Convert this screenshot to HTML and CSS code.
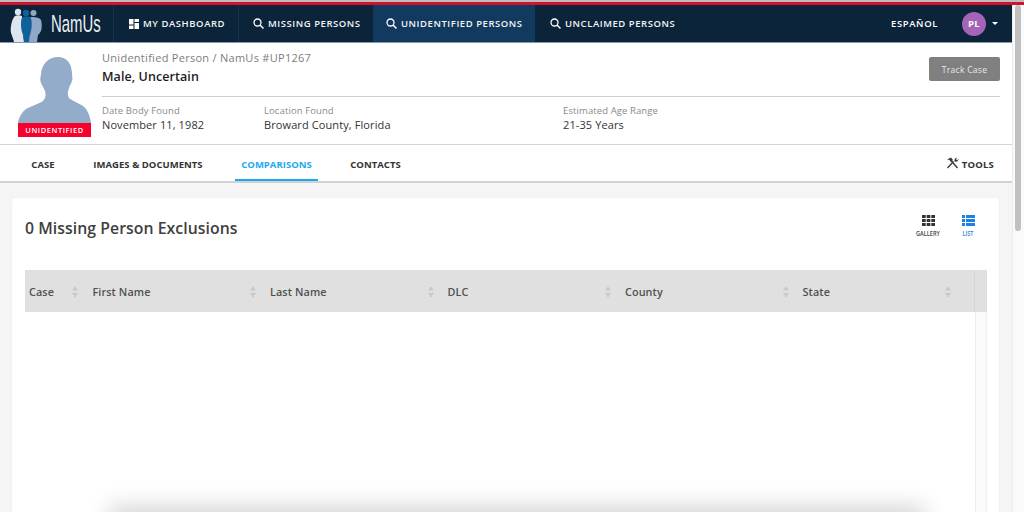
FILE: index.html
```html
<!DOCTYPE html>
<html lang="en">
<head>
<meta charset="utf-8">
<title>NamUs</title>
<link rel="stylesheet" href="styles.css">
</head>
<body>
<div class="topstrip"></div>
<div class="window">
  <div class="page">
    <nav class="nav">
      <a class="logo">
        <svg class="logo-svg" width="33" height="37" viewBox="0 0 33 37">
          <circle cx="8" cy="7" r="3.200" fill="#dfe5ee"/>
          <path fill="#dfe5ee" d="M5 11c2-1 5-1 7 0l2 26H4C3 33 2 31 1 28 0 22 2 14 5 11z"/>
          <circle cx="23.500" cy="8" r="3" fill="#8fa7c8"/>
          <path fill="#8fa7c8" d="M21 12c3 0 8 0 10 3 1 3 1 8 0 11-1 2-2 3-3 4l-1 7H19V14z"/>
          <circle cx="16" cy="8" r="3.200" fill="#0f6199"/>
          <path fill="#0f6199" d="M13 12c2-1 5-1 7 0 2 2 2 7 1.500 11-.5 4-1.500 6-2 9l-.5 5h-5l-1-7c-1-3-2-6-2-10 0-4 0-7 2-8z"/>
        </svg>
        <span class="logo-text">NamUs</span>
      </a>
      <a class="nav-item nav-dash">
        <svg class="nav-icon" width="10" height="10" viewBox="0 0 10 10"><path fill="#fff" d="M0 0h4.500v5.500H0zM5.500 0H10v3H5.500zM5.500 4H10v6H5.500zM0 6.500h4.500V10H0z"/></svg>
        MY DASHBOARD
      </a>
      <a class="nav-item nav-missing">
        <svg class="nav-icon" width="11" height="11" viewBox="0 0 11 11"><circle cx="4.500" cy="4.500" r="3.500" fill="none" stroke="#fff" stroke-width="1.300"/><path d="M7 7l3.500 3.500" stroke="#fff" stroke-width="1.500"/></svg>
        MISSING PERSONS
      </a>
      <a class="nav-item nav-active">
        <svg class="nav-icon" width="11" height="11" viewBox="0 0 11 11"><circle cx="4.500" cy="4.500" r="3.500" fill="none" stroke="#fff" stroke-width="1.300"/><path d="M7 7l3.500 3.500" stroke="#fff" stroke-width="1.500"/></svg>
        UNIDENTIFIED PERSONS
      </a>
      <a class="nav-item nav-unclaimed">
        <svg class="nav-icon" width="11" height="11" viewBox="0 0 11 11"><circle cx="4.500" cy="4.500" r="3.500" fill="none" stroke="#fff" stroke-width="1.300"/><path d="M7 7l3.500 3.500" stroke="#fff" stroke-width="1.500"/></svg>
        UNCLAIMED PERSONS
      </a>
      <div class="nav-right">
        <a class="lang">ESPAÑOL</a>
        <span class="avatar">PL</span>
        <span class="caret"></span>
      </div>
    </nav>

    <header class="case-head">
      <div class="photo">
        <svg class="silhouette" width="73" height="66" viewBox="0 0 73 66">
          <path fill="#92acca" d="M40 0c9 0 14 7 14 17 0 2 1 4 0 7-1 3-2 4-3 7-1 3-2 7 0 10 3 3 10 5 14 8 4 3 7 9 8 17H0c1-6 4-11 8-14 5-3 13-5 17-8 3-3 3-7 2-10-1-3-3-5-4-8-1-3-1-5 0-8C23 8 30 0 40 0z"/>
        </svg>
        <div class="badge">UNIDENTIFIED</div>
      </div>
      <div class="head-main">
        <div class="head-top">
          <div>
            <div class="crumb">Unidentified Person / NamUs #UP1267</div>
            <h1 class="case-title">Male, Uncertain</h1>
          </div>
          <button class="track">Track Case</button>
        </div>
        <div class="facts">
          <div class="fact fact-date"><div class="fact-label">Date Body Found</div><div class="fact-value">November 11, 1982</div></div>
          <div class="fact fact-loc"><div class="fact-label">Location Found</div><div class="fact-value">Broward County, Florida</div></div>
          <div class="fact"><div class="fact-label">Estimated Age Range</div><div class="fact-value">21-35 Years</div></div>
        </div>
      </div>
    </header>

    <div class="tabs">
      <a class="tab tab-case">CASE</a>
      <a class="tab tab-images">IMAGES &amp; DOCUMENTS</a>
      <a class="tab tab-active">COMPARISONS</a>
      <a class="tab tab-contacts">CONTACTS</a>
      <a class="tools">
        <svg class="tools-icon" width="13" height="12" viewBox="0 0 13 12"><path d="M1.500 11L7.500 4.500M11.500 11L5 3.500" stroke="#3a3a3a" stroke-width="1.400" fill="none"/><path d="M1 2.500L5 .5 7 3 5 5 3.500 3z" fill="#3a3a3a"/><path d="M8.500 4.500C8 2.500 9.500.5 11 .8L10 2.300l1 1 1.500-1.200C12.800 3.800 10.500 5.500 8.500 4.500z" fill="#3a3a3a"/></svg>
        TOOLS
      </a>
    </div>

    <main class="content">
      <section class="card">
        <div class="card-head">
          <h2 class="card-title">0 Missing Person Exclusions</h2>
          <div class="views">
            <div class="view">
              <svg width="13" height="11" viewBox="0 0 13 11"><path fill="#333" d="M0 0h3.700v3H0zM4.650 0h3.700v3h-3.700zM9.300 0H13v3H9.300zM0 4h3.700v3H0zM4.650 4h3.700v3h-3.700zM9.300 4H13v3H9.300zM0 8h3.700v3H0zM4.650 8h3.700v3h-3.700zM9.300 8H13v3H9.300z"/></svg>
              <span class="view-label">GALLERY</span>
            </div>
            <div class="view view-on">
              <svg width="13" height="11" viewBox="0 0 13 11"><path fill="#1a82e2" d="M0 0h3v3H0zM4 0h9v3H4zM0 4h3v3H0zM4 4h9v3H4zM0 8h3v3H0zM4 8h9v3H4z"/></svg>
              <span class="view-label">LIST</span>
            </div>
          </div>
        </div>
        <div class="table">
          <div class="thead">
            <div class="th th-case">Case<span class="sort"></span></div>
            <div class="th th-wide">First Name<span class="sort"></span></div>
            <div class="th th-wide">Last Name<span class="sort"></span></div>
            <div class="th th-wide">DLC<span class="sort"></span></div>
            <div class="th th-wide">County<span class="sort"></span></div>
            <div class="th th-state">State<span class="sort"></span></div>
            <div class="th-gutter"></div>
          </div>
          <div class="tbody"><div class="tbody-gutter"></div></div>
        </div>
      </section>
      <div class="bottom-shadow"></div>
    </main>
  </div>
  <aside class="scrollbar"><div class="thumb"></div></aside>
</div>
</body>
</html>
```
FILE: styles.css
```css
* { box-sizing: border-box; }
html, body { margin: 0; height: 512px; overflow: hidden; }
body { font-family: "Open Sans", "Liberation Sans", sans-serif; color: #333; background: #fff; }
a { display: block; }
h1, h2 { margin: 0; font-weight: 600; }

.topstrip { height: 5px; background: linear-gradient(#bdbdbd 0, #bdbdbd 2px, #d3112f 2px, #d3112f 100%); }
.window { display: flex; height: 507px; }
.page { width: 1012px; display: flex; flex-direction: column; position: relative; overflow: hidden; }

.nav { height: 38px; flex: none; display: flex; align-items: stretch; background: #0b2439; border-bottom: 1px solid #8399ad; color: #fff; }
.logo { width: 114px; display: flex; align-items: flex-end; padding-left: 10px; border-right: 1px solid #14324e; overflow: hidden; }
.logo-svg { display: block; flex: none; }
.logo-text { font-family: "Liberation Sans", sans-serif; font-size: 24px; line-height: 37px; margin-left: 8px; transform: scaleX(.62); transform-origin: 0 50%; font-weight: 400; color: #eef1f5; }
.nav-item { display: flex; align-items: center; font-size: 9.500px; font-weight: 600; letter-spacing: .55px; white-space: nowrap; color: #f2f4f6; }
.nav-icon { margin-right: 4px; flex: none; }
.nav-dash { width: 125px; padding-left: 15px; border-right: 1px solid #14324e; }
.nav-missing { width: 134px; padding-left: 14px; }
.nav-active { width: 162px; padding-left: 13px; background: #113a5e; }
.nav-unclaimed { padding-left: 15px; }
.nav-right { margin-left: auto; display: flex; align-items: center; }
.lang { font-size: 9.500px; font-weight: 600; letter-spacing: .6px; margin-right: 24px; }
.avatar { width: 24px; height: 24px; border-radius: 50%; background: #a564b8; display: flex; align-items: center; justify-content: center; font-size: 9.500px; font-weight: 700; letter-spacing: .3px; }
.caret { width: 0; height: 0; border-left: 3px solid transparent; border-right: 3px solid transparent; border-top: 3px solid #fff; margin: 0 14px 0 6px; }

.case-head { height: 102px; flex: none; display: flex; padding: 14px 12px 0 18px; border-bottom: 1px solid #d4d4d4; background: #fff; }
.photo { width: 73px; height: 80px; flex: none; }
.silhouette { display: block; }
.badge { height: 14px; background: #f6022e; color: #fff; font-size: 7.500px; font-weight: 600; letter-spacing: .55px; text-align: center; line-height: 14px; }
.head-main { margin-left: 11px; flex: 1; }
.head-top { height: 40px; display: flex; justify-content: space-between; border-bottom: 1px solid #cfcfcf; }
.crumb { font-size: 11px; line-height: 14px; letter-spacing: .28px; color: #7d7d7d; margin-top: -6px; }
.case-title { font-size: 12.500px; line-height: 16px; margin-top: 4px; font-weight: 600; color: #1d1d1d; letter-spacing: .08px; }
.track { width: 71px; height: 24px; border: 0; border-radius: 2px; background: #808080; color: #e8e8e8; font: 400 8.500px "Open Sans", sans-serif; letter-spacing: .3px; padding: 0; }
.facts { display: flex; padding-top: 7px; }
.fact-date { width: 162px; }
.fact-loc { width: 299px; }
.fact-label { font-size: 9.500px; line-height: 13px; color: #8a8a8a; letter-spacing: .1px; }
.fact-value { font-size: 11px; line-height: 15px; color: #333; letter-spacing: .1px; }

.tabs { height: 38px; flex: none; display: flex; align-items: stretch; background: #fff; border-bottom: 2px solid #d2d2d2; font-size: 9.500px; font-weight: 700; color: #333; }
.tab { display: flex; align-items: center; justify-content: center; height: 36px; padding-top: 2px; letter-spacing: .03px; }
.tab-case { margin-left: 31px; width: 24px; }
.tab-images { margin-left: 38px; width: 110px; }
.tab-active { margin-left: 32px; width: 83px; color: #1ba9ee; border-bottom: 2px solid #1ba9ee; padding-top: 4px; }
.tab-contacts { margin-left: 32px; width: 51px; }
.tools { margin-left: auto; margin-right: 18px; display: flex; align-items: center; height: 36px; padding-top: 2px; font-size: 9.500px; letter-spacing: .2px; color: #333; }
.tools-icon { margin-right: 3px; margin-top: -3px; }

.content { flex: 1; background: #f5f5f5; padding: 15px 13px 0 12px; position: relative; overflow: hidden; }
.card { height: 400px; background: #fff; border-radius: 3px; padding: 0 12px 0 13px; box-shadow: 0 0 2px rgba(0,0,0,.05); }
.card-head { height: 72px; display: flex; justify-content: space-between; }
.card-title { font-size: 15.800px; line-height: 20px; margin-top: 20px; font-weight: 600; color: #404040; letter-spacing: .05px; }
.views { display: flex; margin-top: 17px; margin-right: 8px; gap: 18px; }
.view { display: flex; flex-direction: column; align-items: center; width: 22px; }
.view svg { display: block; }
.view-label { font-size: 7px; font-weight: 600; color: #444; margin-top: 3px; line-height: 9px; transform: scaleX(.8); }
.view-on .view-label { color: #1a82e2; }

.table { display: flex; flex-direction: column; height: 330px; }
.thead { height: 42px; background: #e0e0e0; display: flex; align-items: stretch; font-size: 10.800px; font-weight: 600; color: #505050; flex: none; }
.th { display: flex; align-items: center; justify-content: space-between; padding: 1px 0 0 4px; letter-spacing: .1px; }
.th-case { width: 63.500px; padding-right: 11px; }
.th-wide { width: 177.500px; padding-right: 10px; }
.th-state { width: 173px; padding-right: 21px; }
.sort { width: 6px; height: 11px; background:
  linear-gradient(to top left, #c9c9c9 50%, transparent 50.500%) 0 0 / 3px 4.500px no-repeat,
  linear-gradient(to top right, #c9c9c9 50%, transparent 50.500%) 3px 0 / 3px 4.500px no-repeat,
  linear-gradient(to bottom left, #c9c9c9 50%, transparent 50.500%) 0 6.500px / 3px 4.500px no-repeat,
  linear-gradient(to bottom right, #c9c9c9 50%, transparent 50.500%) 3px 6.500px / 3px 4.500px no-repeat; }
.th-gutter { width: 13px; margin-left: auto; border-left: 1px solid #d6d6d6; }
.tbody { flex: 1; display: flex; justify-content: flex-end; }
.tbody-gutter { width: 12px; background: #fafafa; border-left: 1px solid #ececec; border-right: 1px solid #f0f0f0; }

.bottom-shadow { position: absolute; left: 115px; right: 93px; bottom: -18px; height: 18px; box-shadow: 0 0 22px 6px rgba(0,0,0,.17); background: #ddd; }

.scrollbar { width: 12px; flex: none; background: #fafafa; border-left: 1px solid #ececec; padding: 0 3px 0 2px; }
.thumb { width: 6px; height: 226px; background: #c0c0c0; border-radius: 3px; }
```
